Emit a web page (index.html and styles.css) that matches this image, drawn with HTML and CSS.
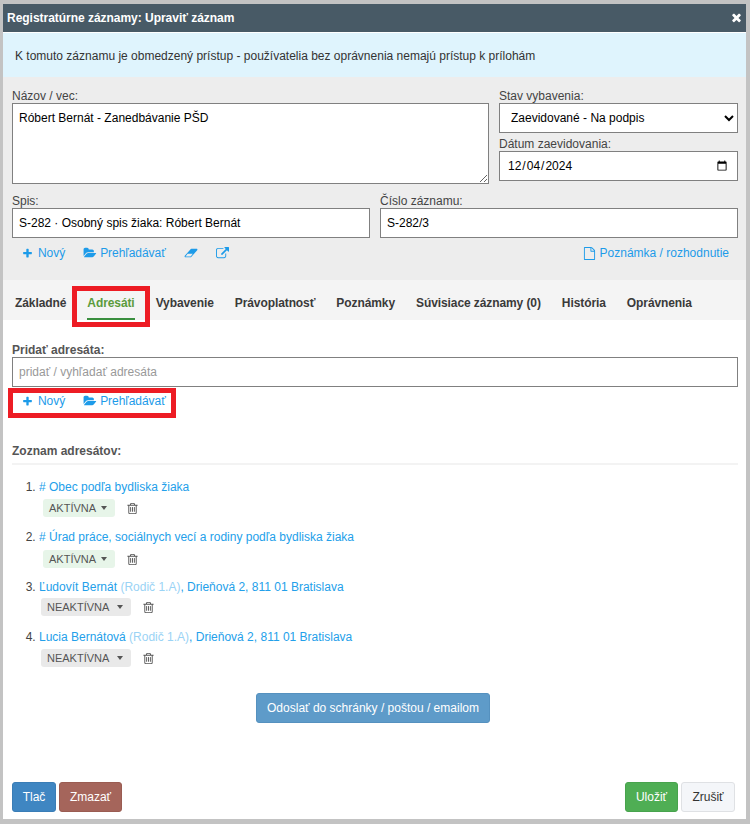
FILE: index.html
```html
<!DOCTYPE html>
<html lang="sk">
<head>
<meta charset="utf-8">
<title>Registratúrne záznamy</title>
<link rel="stylesheet" href="styles.css">
</head>
<body>
<svg class="defs" aria-hidden="true">
  <symbol id="i-plus" viewBox="0 0 1792 1792"><path d="M1600 736v192q0 40-28 68t-68 28h-416v416q0 40-28 68t-68 28h-192q-40 0-68-28t-28-68v-416h-416q-40 0-68-28t-28-68v-192q0-40 28-68t68-28h416v-416q0-40 28-68t68-28h192q40 0 68 28t28 68v416h416q40 0 68 28t28 68z"/></symbol>
  <symbol id="i-times" viewBox="0 0 1792 1792"><path d="M1490 1322q0 40-28 68l-136 136q-28 28-68 28t-68-28l-294-294-294 294q-28 28-68 28t-68-28l-136-136q-28-28-28-68t28-68l294-294-294-294q-28-28-28-68t28-68l136-136q28-28 68-28t68 28l294 294 294-294q28-28 68-28t68 28l136 136q28 28 28 68t-28 68l-294 294 294 294q28 28 28 68z"/></symbol>
  <symbol id="i-folder" viewBox="0 0 2048 1792"><path d="M1943 952q0 31-31 66l-336 396q-43 51-120.5 86.5t-143.5 35.5h-1088q-34 0-60.5-13t-26.5-43q0-31 31-66l336-396q43-51 120.5-86.5t143.5-35.5h1088q34 0 60.5 13t26.5 43zm-343-344v160h-832q-94 0-197 47.5t-164 119.5l-337 396-5 6q0-4-.5-12.5t-.5-12.5v-960q0-92 66-158t158-66h320q92 0 158 66t66 158v32h544q92 0 158 66t66 158z"/></symbol>
  <symbol id="i-eraser" viewBox="0 0 2048 1792"><path d="M960 1408l336-384h-768l-336 384h768zm1013-1077q15 34 9.5 71.5t-30.5 65.5l-896 1024q-38 44-96 44h-768q-38 0-69.5-20.5t-47.5-54.5q-15-34-9.5-71.5t30.5-65.5l896-1024q38-44 96-44h768q38 0 69.5 20.5t47.5 54.5z"/></symbol>
  <symbol id="i-ext" viewBox="0 0 1792 1792"><path d="M1408 928v320q0 119-84.5 203.5t-203.5 84.5h-832q-119 0-203.5-84.5t-84.5-203.5v-832q0-119 84.5-203.5t203.5-84.5h704q14 0 23 9t9 23v64q0 14-9 23t-23 9h-704q-66 0-113 47t-47 113v832q0 66 47 113t113 47h832q66 0 113-47t47-113v-320q0-14 9-23t23-9h64q14 0 23 9t9 23zm384-864v512q0 26-19 45t-45 19-45-19l-176-176-652 652q-10 10-23 10t-23-10l-114-114q-10-10-10-23t10-23l652-652-176-176q-19-19-19-45t19-45 45-19h512q26 0 45 19t19 45z"/></symbol>
  <symbol id="i-file" viewBox="0 0 1792 1792"><path d="M1596 380q28 28 48 76t20 88v1152q0 40-28 68t-68 28h-1344q-40 0-68-28t-28-68v-1600q0-40 28-68t68-28h896q40 0 88 20t76 48zm-444-244v376h376q-10-29-22-41l-313-313q-12-12-41-22zm384 1528v-1024h-416q-40 0-68-28t-28-68v-416h-768v1536h1280z"/></symbol>
  <symbol id="i-trash" viewBox="0 0 1792 1792"><path d="M704 736v576q0 14-9 23t-23 9h-64q-14 0-23-9t-9-23v-576q0-14 9-23t23-9h64q14 0 23 9t9 23zm256 0v576q0 14-9 23t-23 9h-64q-14 0-23-9t-9-23v-576q0-14 9-23t23-9h64q14 0 23 9t9 23zm256 0v576q0 14-9 23t-23 9h-64q-14 0-23-9t-9-23v-576q0-14 9-23t23-9h64q14 0 23 9t9 23zm128 724v-948h-896v948q0 22 7 40.5t14.5 27 10.5 8.5h832q3 0 10.5-8.5t14.5-27 7-40.5zm-672-1076h448l-48-117q-7-9-17-11h-317q-10 2-17 11zm928 32v64q0 14-9 23t-23 9h-96v948q0 83-47 143.5t-113 60.5h-832q-66 0-113-59t-47-142v-952h-96q-14 0-23-9t-9-23v-64q0-14 9-23t23-9h309l70-167q15-37 54-63t79-26h320q40 0 79 26t54 63l70 167h309q14 0 23 9t9 23z"/></symbol>
</svg>

<div class="dialog">
  <header class="head">
    <span class="head-title">Registratúrne záznamy: Upraviť záznam</span>
    <svg class="head-close"><use href="#i-times"/></svg>
  </header>
  <div class="alert">K tomuto záznamu je obmedzený prístup - používatelia bez oprávnenia nemajú prístup k prílohám</div>

  <section class="form">
    <div class="row-top">
      <div class="col-name">
        <label class="lbl">Názov / vec:</label>
        <textarea class="ctl area">Róbert Bernát - Zanedbávanie PŠD</textarea>
      </div>
      <div class="col-state">
        <label class="lbl">Stav vybavenia:</label>
        <select class="ctl sel"><option>Zaevidované - Na podpis</option></select>
        <label class="lbl lbl-date">Dátum zaevidovania:</label>
        <input class="ctl date" type="date" value="2024-12-04">
      </div>
    </div>
    <div class="row-mid">
      <div class="col-half">
        <label class="lbl">Spis:</label>
        <input class="ctl txt" type="text" value="S-282 · Osobný spis žiaka: Róbert Bernát">
      </div>
      <div class="col-half">
        <label class="lbl">Číslo záznamu:</label>
        <input class="ctl txt" type="text" value="S-282/3">
      </div>
    </div>
    <div class="links">
      <a class="lnk"><svg class="ic ic-plus"><use href="#i-plus"/></svg>Nový</a>
      <a class="lnk"><svg class="ic ic-folder"><use href="#i-folder"/></svg>Prehľadávať</a>
      <a class="lnk"><svg class="ic ic-eraser"><use href="#i-eraser"/></svg></a>
      <a class="lnk"><svg class="ic ic-ext"><use href="#i-ext"/></svg></a>
      <a class="lnk lnk-right"><svg class="ic ic-file"><use href="#i-file"/></svg>Poznámka / rozhodnutie</a>
    </div>
  </section>

  <nav class="tabs">
    <a class="tab">Základné</a>
    <a class="tab tab-on">Adresáti</a>
    <a class="tab">Vybavenie</a>
    <a class="tab">Právoplatnosť</a>
    <a class="tab">Poznámky</a>
    <a class="tab">Súvisiace záznamy (0)</a>
    <a class="tab">História</a>
    <a class="tab">Oprávnenia</a>
  </nav>

  <section class="body">
    <label class="lbl-b">Pridať adresáta:</label>
    <input class="ctl txt txt-add" type="text" placeholder="pridať / vyhľadať adresáta">
    <div class="links links-add">
      <a class="lnk"><svg class="ic ic-plus"><use href="#i-plus"/></svg>Nový</a>
      <a class="lnk"><svg class="ic ic-folder"><use href="#i-folder"/></svg>Prehľadávať</a>
    </div>
    <h2 class="list-title">Zoznam adresátov:</h2>
    <ol class="list">
      <li class="item">
        <a class="ad"># Obec podľa bydliska žiaka</a>
        <div class="st"><span class="badge badge-on">AKTÍVNA<i class="caret"></i></span><svg class="trash"><use href="#i-trash"/></svg></div>
      </li>
      <li class="item">
        <a class="ad"># Úrad práce, sociálnych vecí a rodiny podľa bydliska žiaka</a>
        <div class="st"><span class="badge badge-on">AKTÍVNA<i class="caret"></i></span><svg class="trash"><use href="#i-trash"/></svg></div>
      </li>
      <li class="item">
        <a class="ad">Ľudovít Bernát <span class="role">(Rodič 1.A)</span>, Drieňová 2, 811 01 Bratislava</a>
        <div class="st st-off"><span class="badge badge-off">NEAKTÍVNA<i class="caret"></i></span><svg class="trash"><use href="#i-trash"/></svg></div>
      </li>
      <li class="item">
        <a class="ad">Lucia Bernátová <span class="role">(Rodič 1.A)</span>, Drieňová 2, 811 01 Bratislava</a>
        <div class="st st-off"><span class="badge badge-off">NEAKTÍVNA<i class="caret"></i></span><svg class="trash"><use href="#i-trash"/></svg></div>
      </li>
    </ol>
    <div class="send-wrap"><button class="btn btn-send">Odoslať do schránky / poštou / emailom</button></div>
  </section>

  <footer class="foot">
    <button class="btn btn-print">Tlač</button>
    <button class="btn btn-del">Zmazať</button>
    <button class="btn btn-save">Uložiť</button>
    <button class="btn btn-cancel">Zrušiť</button>
  </footer>

  <div class="mark mark-tab"></div>
  <div class="mark mark-links"></div>
</div>
</body>
</html>
```

FILE: styles.css
```css
* { box-sizing: border-box; }
html, body { margin: 0; height: 824px; overflow: hidden; }
body { background: #c3c3c3; font-family: "Liberation Sans", Arial, sans-serif; font-size: 12px; color: #333; padding: 4px 4px 5px 3px; }
.defs { position: absolute; width: 0; height: 0; }
.dialog { position: relative; width: 743px; height: 815px; background: #fff; display: flex; flex-direction: column; }

.head { height: 28px; background: #485a66; color: #fff; display: flex; align-items: center; justify-content: space-between; padding: 0 3px 0 4px; flex: none; }
.head-title { font-weight: bold; font-size: 12px; letter-spacing: -0.03px; }
.head-close { width: 13px; height: 13px; fill: #fff; margin-bottom: 1px; }

.alert { height: 45px; flex: none; background: #dff4fd; border-top: 1px solid #fff; padding: 15px 12px 0; line-height: 16px; color: #333; }

.form { height: 203px; flex: none; background: #ededed; padding: 10px 8px 0 9px; }
.lbl { display: block; height: 16px; line-height: 19px; color: #444; }
.ctl { display: block; width: 100%; border: 1px solid #808080; background: #fff; color: #000; font-family: "Liberation Sans", Arial, sans-serif; font-size: 12px; border-radius: 0; outline: none; }
.row-top { display: flex; gap: 10px; }
.col-name { width: 477px; flex: none; }
.col-state { flex: 1; }
.area { height: 81px; padding: 7px 6px 6px; margin: 0; line-height: 15px; resize: vertical; }
.sel { height: 30px; padding: 0 7px; margin: 0; }
.lbl-date { margin-top: 2px; height: 16px; }
.date { height: 30px; padding: 0 7px; margin: 0; }
.row-mid { display: flex; gap: 10px; margin-top: 8px; }
.col-half { flex: 1; }
.txt { height: 30px; padding: 0 6px; margin: 0; }
.txt::placeholder { color: #999; opacity: 1; }

.links { display: flex; align-items: center; height: 16px; margin-top: 7px; padding-left: 10px; gap: 18px; }
.lnk { display: inline-flex; align-items: center; color: #1d9be9; line-height: 16px; letter-spacing: -0.05px; }
.lnk-right { margin-left: auto; margin-right: 9px; letter-spacing: 0; }
.ic { fill: #1d9be9; flex: none; display: block; }
.ic-plus { width: 11px; height: 11px; margin-right: 5px; }
.ic-folder { width: 14px; height: 12px; margin-right: 3px; }
.ic-eraser { width: 14px; height: 12px; }
.ic-ext { width: 13px; height: 13px; }
.ic-file { width: 13px; height: 13px; margin-right: 4px; }

.tabs { height: 40px; flex: none; background: #f4f4f4; display: flex; padding: 0 0 0 12px; gap: 21px; }
.tab { font-weight: bold; color: #3a3a3a; line-height: 46px; height: 40px; letter-spacing: -0.09px; }
.tab-on { color: #5b9b3c; border-bottom: 2px solid #3a8f3f; }

.body { flex: none; padding: 22px 8px 0 9px; height: 462px; }
.lbl-b { display: block; font-weight: bold; color: #555; height: 15px; line-height: 16px; }
.txt-add { margin-top: 0; }
.links-add { margin-top: 6px; }
.list-title { margin: 34px 0 0; font-size: 12px; font-weight: bold; color: #555; height: 22px; line-height: 16px; border-bottom: 2px solid #f3f3f3; }
.list { margin: 13px 0 0; padding: 0 0 0 27px; color: #444; }
.item { height: 50px; line-height: 18px; }
.ad { color: #23a0ea; }
.role { color: #9ad3f5; }
.st { display: flex; align-items: center; margin: 3px 0 0 4px; height: 18px; }
.st-off { margin: 2px 0 0 2px; }
.item:nth-child(2) .st { margin-top: 4px; }
.item:nth-child(4) .st { margin-top: 3px; }
.badge { height: 18px; display: inline-flex; align-items: center; padding: 0 6px; border-radius: 3px; color: #555; font-size: 11px; }
.badge-on { background: #e7f5e9; width: 72px; }
.badge-off { background: #e9e9e9; width: 90px; }
.caret { width: 0; height: 0; border-left: 3.5px solid transparent; border-right: 3.5px solid transparent; border-top: 4px solid #555; margin-left: auto; margin-right: 2px; }
.trash { width: 13px; height: 13px; fill: #555; margin-left: 11px; }

.send-wrap { display: flex; margin: 15px 0 0 244px; }
.btn { border: 1px solid transparent; border-radius: 3px; font-family: "Liberation Sans", Arial, sans-serif; font-size: 12px; color: #fff; height: 30px; padding: 0; margin: 0; }
.btn-send { width: 234px; background: #5e9bc9; border-color: #5591bf; }

.foot { flex: none; display: flex; gap: 3px; padding: 0 11px 0 9px; }
.btn-print { width: 44px; background: #3f86c2; border-color: #3a7db6; }
.btn-del { width: 63px; background: #a5655b; border-color: #9a5c52; }
.btn-save { width: 53px; background: #4fae54; border-color: #48a34d; margin-left: auto; }
.btn-cancel { width: 54px; background: #f4f6f9; border-color: #dfe1e4; color: #333; }

.mark { position: absolute; border: 5px solid #ed1c24; pointer-events: none; }
.mark-tab { left: 69px; top: 282px; width: 78px; height: 41px; }
.mark-links { left: 5px; top: 384px; width: 168px; height: 30px; }
```
